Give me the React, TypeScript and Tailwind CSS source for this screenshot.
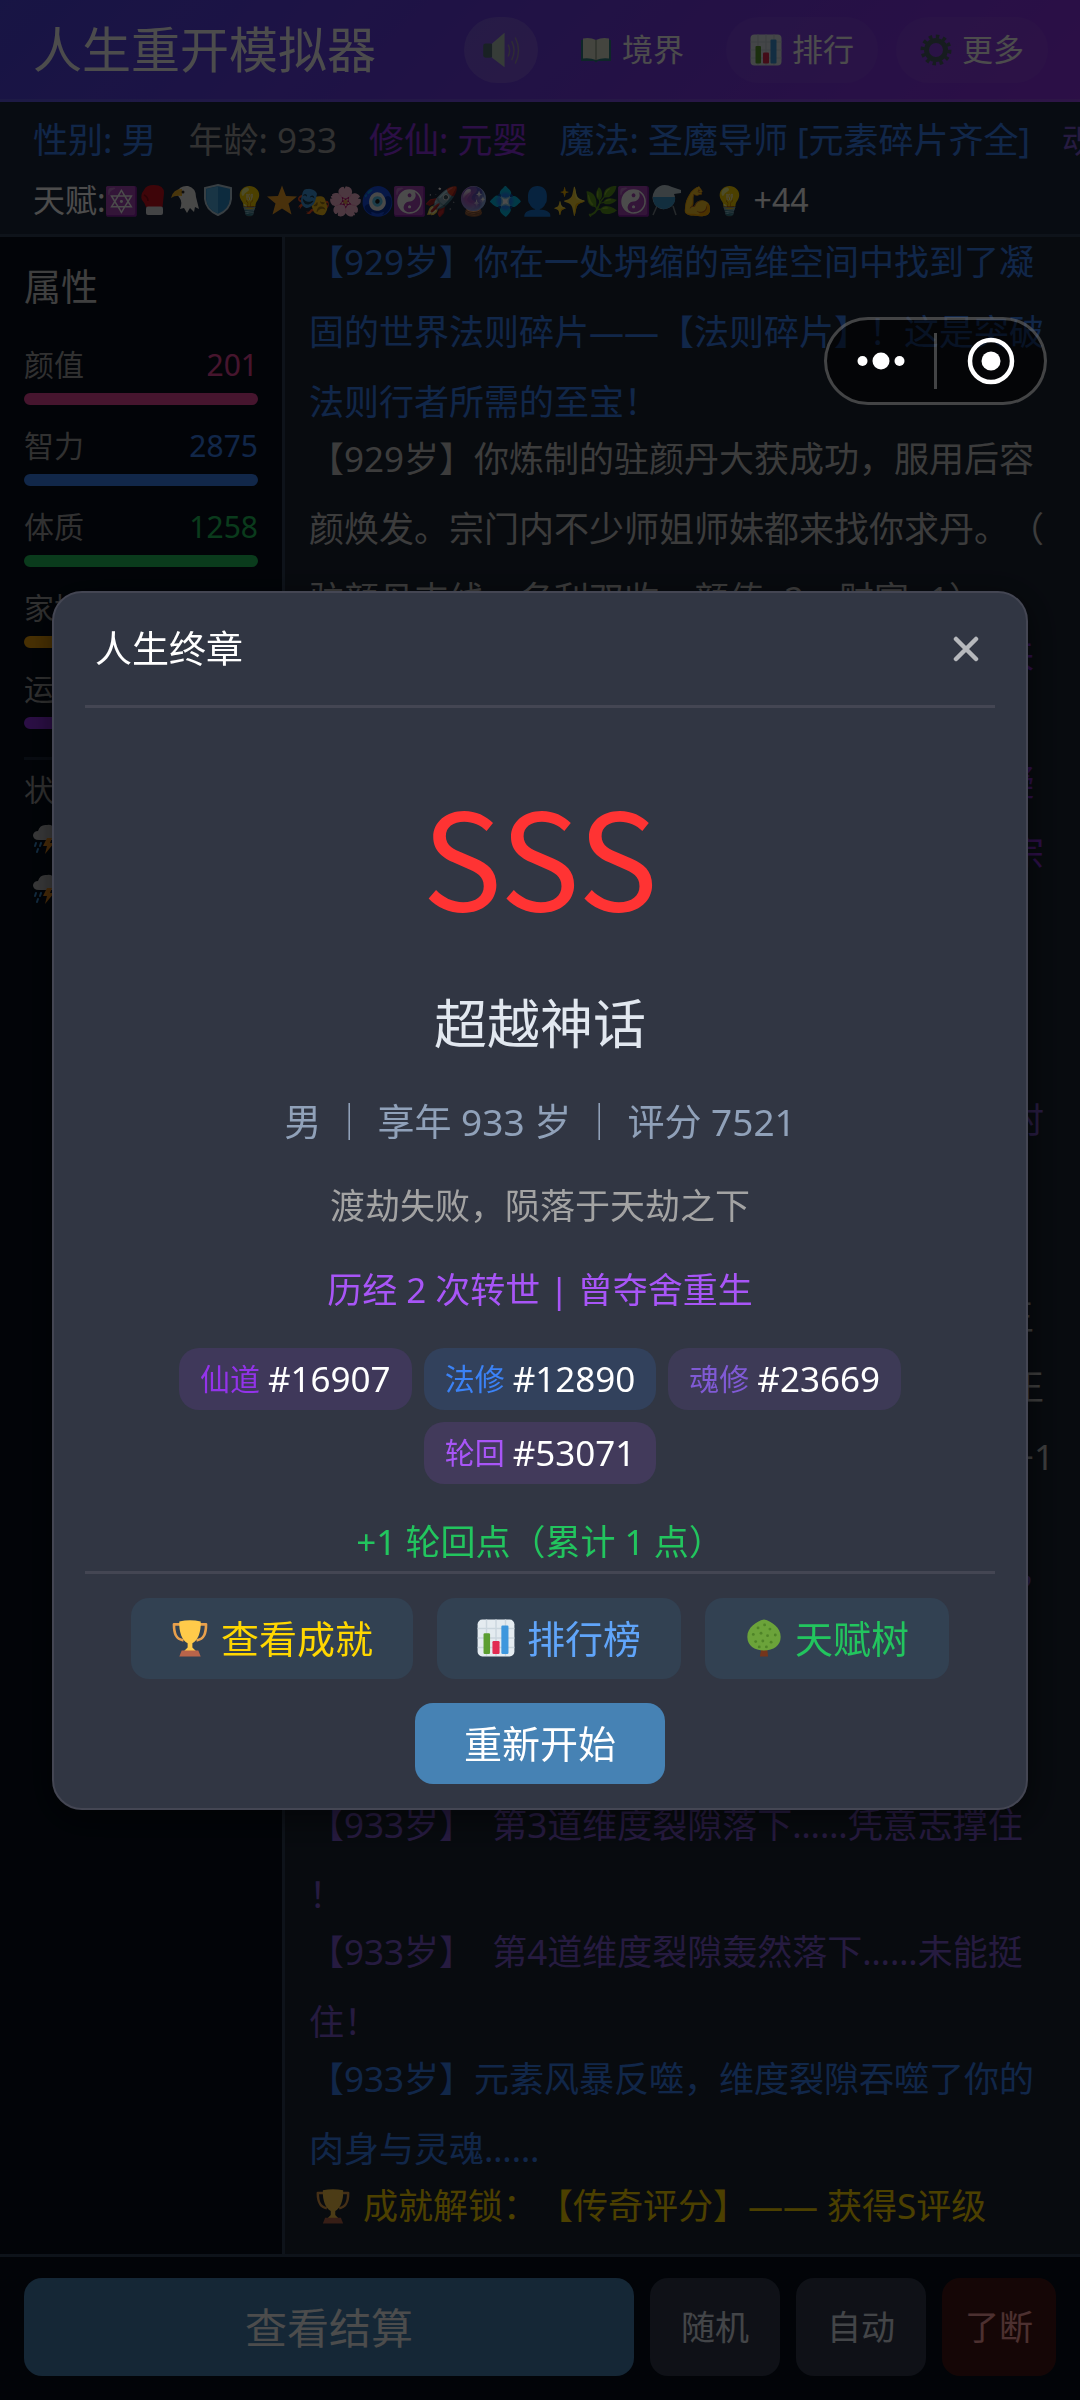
import { ReactNode, useState } from "react";

type TStat = {
  label: string;
  value: number;
  text: string;
  bar: string;
};

type TLog = {
  text: string;
  color: string;
};

const STATS: TStat[] = [
  { label: "颜值", value: 201, text: "text-[#ec4899]", bar: "bg-[#ec4899]" },
  { label: "智力", value: 2875, text: "text-[#3b82f6]", bar: "bg-[#3b82f6]" },
  { label: "体质", value: 1258, text: "text-[#22c55e]", bar: "bg-[#22c55e]" },
  { label: "家境", value: 986, text: "text-[#f5a50b]", bar: "bg-[#f5a50b]" },
  { label: "运气", value: 742, text: "text-[#9333ea]", bar: "bg-[#9333ea]" },
];

const LOGS: TLog[] = [
  {
    text: "【929岁】你在一处坍缩的高维空间中找到了凝固的世界法则碎片——【法则碎片】！这是突破法则行者所需的至宝！",
    color: "text-[#3b82f6]",
  },
  {
    text: "【929岁】你炼制的驻颜丹大获成功，服用后容颜焕发。宗门内不少师姐师妹都来找你求丹。（驻颜丹支线，名利双收，颜值+2，财富+1）",
    color: "text-[#c8c8c8]",
  },
  {
    text: "【930岁】你闭关参悟天地大道，忽有灵光袭来，元婴与天地共鸣，修为再进。（悟性略提升）",
    color: "text-[#9333ea]",
  },
  {
    text: "【930岁】你以无上法力引动九霄雷火，将其凝成本命法宝，威震八方，各派共尊你为正道大宗",
    color: "text-[#9333ea]",
  },
  {
    text: "【931岁】神魂深处传来低语，你以魂力镇守，识海深处波涛翻涌，历经了七七四十九个日夜，方才归于平静。你的神魂也自此更加凝练通透，举手投足之间皆有大道相随，只等待那突破之时。你独坐山巅，遥望星河，追忆着那前尘往事，恍若隔世。",
    color: "text-[#805ad5]",
  },
  {
    text: "【932岁】你回到故乡，昔日旧友皆已不在，王府设宴款待，席间谈起往事，感慨万千，唯有正气长存，心境也因此而圆满。（运气+1，智力+1",
    color: "text-[#c8c8c8]",
  },
  { text: "【932岁】天劫将至，乌云密布。", color: "text-[#805ad5]" },
  {
    text: "【933岁】第1道维度裂隙落下，你全力抵挡住，最终安然无恙！",
    color: "text-[#805ad5]",
  },
  {
    text: "【933岁】第2道维度裂隙落下……护体灵光破，你勉强撑住！",
    color: "text-[#805ad5]",
  },
  {
    text: "【933岁】\u00a0\u00a0第3道维度裂隙落下……凭意志撑住！",
    color: "text-[#805ad5]",
  },
  {
    text: "【933岁】\u00a0\u00a0第4道维度裂隙轰然落下……未能挺住！",
    color: "text-[#805ad5]",
  },
  {
    text: "【933岁】元素风暴反噬，维度裂隙吞噬了你的肉身与灵魂……",
    color: "text-[#3b82f6]",
  },
];

const RANKS = [
  { label: "仙道", rank: "#16907", text: "text-[#9333ea]", bg: "bg-[#3f385a]" },
  { label: "法修", rank: "#12890", text: "text-[#3b82f6]", bg: "bg-[#32415c]" },
  { label: "魂修", rank: "#23669", text: "text-[#805ad5]", bg: "bg-[#3d3a56]" },
  { label: "轮回", rank: "#53071", text: "text-[#a855f7]", bg: "bg-[#423a5b]" },
];

const Emoji = ({ char }: { char: string }) => (
  <span className="inline-flex w-8 shrink-0 items-center justify-center text-[28px] leading-none">
    {char}
  </span>
);

const Icon = ({
  children,
  className = "size-8",
}: {
  children: ReactNode;
  className?: string;
}) => (
  <svg viewBox="0 0 32 32" className={`shrink-0 ${className}`} aria-hidden="true">
    {children}
  </svg>
);

const TrophyIcon = ({ className }: { className?: string }) => (
  <Icon className={className}>
    <path
      d="M8 4.5 H2.5 C2.5 12 4 17 10.5 18 M24 4.5 H29.5 C29.5 12 28 17 21.5 18"
      fill="none"
      stroke="#e8a04c"
      strokeWidth="2.2"
      strokeLinejoin="round"
    />
    <path
      d="M7 2 Q16 0 25 2 C25.5 11 22.5 18 18 20.5 V24 L21 27 H11 L14 24 V20.5 C9.5 18 6.5 11 7 2 Z"
      fill="#ffca4a"
    />
    <path d="M9 26.5 H23 L25 31.5 H7 Z" fill="#b9644a" />
  </Icon>
);

const ChartIcon = ({ className }: { className?: string }) => (
  <Icon className={className}>
    <rect x="0.5" y="0.5" width="31" height="31" rx="4" fill="#e4ebf0" />
    <path
      d="M0.5 8 H31.5 M0.5 16 H31.5 M0.5 24 H31.5 M8 0.5 V31 M16 0.5 V31 M24 0.5 V31"
      stroke="#cbd6de"
      strokeWidth="1.2"
    />
    <rect x="5.5" y="12" width="5.5" height="17.5" rx="1" fill="#5c9e31" />
    <rect x="13" y="18.5" width="6" height="11" rx="1" fill="#e22b52" />
    <rect x="20.5" y="5.5" width="6" height="24" rx="1" fill="#3e97dd" />
  </Icon>
);

const TreeIcon = ({ className }: { className?: string }) => (
  <Icon className={className}>
    <path d="M14 24 H18.5 L19.5 31.5 H12.5 Z" fill="#74351c" />
    <path
      d="M16 0.5 C23 2 30.5 8 30 15.5 C30 22 24 26.5 16 26.5 C8 26.5 2 22 2 15.5 C1.5 8 9 2 16 0.5 Z"
      fill="#6ba33a"
    />
    <g fill="#4f8428">
      <circle cx="11" cy="7.5" r="1.2" />
      <circle cx="16.5" cy="5" r="1.2" />
      <circle cx="21" cy="8.5" r="1.2" />
      <circle cx="7" cy="13" r="1.2" />
      <circle cx="13.5" cy="12" r="1.2" />
      <circle cx="19" cy="14" r="1.2" />
      <circle cx="25.5" cy="13.5" r="1.2" />
      <circle cx="9" cy="19" r="1.2" />
      <circle cx="15" cy="18.5" r="1.2" />
      <circle cx="22" cy="19.5" r="1.2" />
      <circle cx="12" cy="23.5" r="1.2" />
      <circle cx="18" cy="23.5" r="1.2" />
    </g>
  </Icon>
);

const SpeakerIcon = () => (
  <Icon className="size-[38px]">
    <rect x="1" y="10.5" width="8" height="12" rx="2" fill="#56707a" />
    <path d="M8.5 10.5 L19 1.5 V30.5 L8.5 22.5 Z" fill="#b6c9bd" />
    <path
      d="M22 11.5 Q24.5 16.5 22 21.5 M25 8.5 Q29 16.5 25 24.5 M28 5.5 Q33.5 16.5 28 27.5"
      fill="none"
      stroke="#9b93ad"
      strokeWidth="1.2"
    />
  </Icon>
);

const BookIcon = () => (
  <Icon>
    <path d="M1 6 H31 V27 H18 L16 28.5 L14 27 H1 Z" fill="#2f7f86" />
    <path
      d="M3 4.5 Q10 3 16 6 Q22 3 29 4.5 V24.5 Q22 23.5 16 26 Q10 23.5 3 24.5 Z"
      fill="#e3e6d2"
    />
    <path d="M16 6 V26" stroke="#9fa793" strokeWidth="1.5" />
  </Icon>
);

const GearIcon = () => (
  <Icon>
    <circle
      cx="16"
      cy="16"
      r="13.5"
      fill="none"
      stroke="#4b6068"
      strokeWidth="4"
      strokeDasharray="3.5 3.5"
    />
    <circle cx="16" cy="16" r="9.5" fill="none" stroke="#4b6068" strokeWidth="5" />
  </Icon>
);

const GloveIcon = () => (
  <Icon>
    <path
      d="M6 6 Q8 1 16 1 Q26 1 26 9 L24.5 23 H8 Q7 19 4 16 Q2 11 6 6 Z"
      fill="#d1121f"
    />
    <path d="M6 11 Q10 13 10 17" fill="none" stroke="#8f0a14" strokeWidth="1.5" />
    <rect x="8" y="22.5" width="17" height="8.5" rx="2" fill="#dfe3e6" />
  </Icon>
);

const EagleIcon = () => (
  <Icon>
    <path
      d="M6 9 Q10 1 18 2 Q26 4 26 13 L29 25 L25 23 L24 28 L20 24 L17 29 L14 24 L10 25 Q13 18 9 13 Z"
      fill="#f1f1ee"
    />
    <path d="M12 5 Q3 5 1 14 Q5 11 12 12 Z" fill="#f5b52a" />
    <circle cx="13" cy="8" r="1.5" fill="#33302c" />
  </Icon>
);

const ShieldIcon = () => (
  <Icon>
    <path
      d="M16 1 L29 4 V15 Q28 26 16 31 Q4 26 3 15 V4 Z"
      fill="#2d8fd0"
      stroke="#bcd3e0"
      strokeWidth="2"
    />
    <path d="M16 2.5 V29.5 Q5 25 4.5 15 V5 Z" fill="#56b3e6" />
  </Icon>
);

const StarIcon = () => (
  <Icon>
    <path
      d="M16 1.5 L20 12 L31 12.5 L22.5 19.5 L25.5 30.5 L16 24.5 L6.5 30.5 L9.5 19.5 L1 12.5 L12 12 Z"
      fill="#f5a52a"
    />
  </Icon>
);

const AlembicIcon = () => (
  <Icon>
    <path d="M7 22 L3 31 M23 22 L26 31" stroke="#7d8a92" strokeWidth="1.5" />
    <path
      d="M31 6 L22 3 Q12 -2 5 6 Q0 14 5 21 Q13 29 22 22 Q27 16 24 10 L31 9 Z"
      fill="#c3d2da"
    />
    <path d="M3 13 H25 Q26 19 21 22.5 Q13 28 6 22 Q2.5 18 3 13 Z" fill="#3c9ad0" />
  </Icon>
);

const StormIcon = () => (
  <Icon>
    <path
      d="M7 17 Q1 17 1 12 Q2 8 6 8 Q8 1 15 2 Q20 1 23 6 Q31 6 31 12 Q30 17 25 17 Z"
      fill="#c3c3c6"
    />
    <path d="M15 15 H20 L18 20 H22 L13 31 L15 23 H11 Z" fill="#f7931e" />
    <path
      d="M4 20 L3 23 M9 20 L8 23 M6 26 L5 29 M25 20 L24 23 M28 25 L27 28"
      stroke="#3e97dd"
      strokeWidth="2"
      strokeLinecap="round"
    />
  </Icon>
);

const TALENTS: ReactNode[] = [
  <Emoji char="🔯" />,
  <GloveIcon />,
  <EagleIcon />,
  <ShieldIcon />,
  <Emoji char="💡" />,
  <StarIcon />,
  <Emoji char="🎭" />,
  <Emoji char="🌸" />,
  <Emoji char="🧿" />,
  <Emoji char="☯️" />,
  <Emoji char="🚀" />,
  <Emoji char="🔮" />,
  <Emoji char="💠" />,
  <Emoji char="👤" />,
  <Emoji char="✨" />,
  <Emoji char="🌿" />,
  <Emoji char="☯️" />,
  <AlembicIcon />,
  <Emoji char="💪" />,
  <Emoji char="💡" />,
];

const NAV = [
  { label: "境界", icon: <BookIcon />, bg: "" },
  { label: "排行", icon: <ChartIcon />, bg: "bg-white/5" },
  { label: "更多", icon: <GearIcon />, bg: "bg-white/5" },
];

const Header = () => (
  <header className="flex items-center justify-between border-b-3 border-white/10 bg-[linear-gradient(135deg,#4f46e5,#9333ea)] pr-8 pl-[33px]">
    <h1 className="text-[49px] leading-[99px] whitespace-nowrap text-white">
      人生重开模拟器
    </h1>
    <div className="flex gap-[18px] text-[31px]">
      <button
        aria-label="声音"
        className="flex h-[66px] w-[74px] items-center justify-center rounded-full bg-white/15"
      >
        <SpeakerIcon />
      </button>
      {NAV.map((item) => (
        <button
          key={item.label}
          className={`flex h-[66px] items-center gap-2.5 rounded-full px-6 text-white ${item.bg}`}
        >
          {item.icon}
          {item.label}
        </button>
      ))}
    </div>
  </header>
);

const StatusBar = () => (
  <section className="overflow-hidden border-b-3 border-slate-700 bg-slate-800 px-[33px] pt-3 pb-2.5">
    <div className="flex gap-8 text-[35px] leading-[52px] whitespace-nowrap">
      <span className="text-[#3b82f6]">性别: 男</span>
      <span className="text-[#a3a3a3]">年龄: 933</span>
      <span className="text-[#9333ea]">修仙: 元婴</span>
      <span className="text-[#3b82f6]">魔法: 圣魔导师 [元素碎片齐全]</span>
      <span className="text-[#805ad5]">魂修: 魂圣</span>
    </div>
    <div className="mt-2.5 flex items-center text-[32px] leading-[48px] whitespace-nowrap text-white">
      <span>天赋:</span>
      {TALENTS.map((talent, i) => (
        <span key={i} className="flex">
          {talent}
        </span>
      ))}
      <span className="ml-2">+44</span>
    </div>
  </section>
);

const Sidebar = () => (
  <aside className="w-[285px] shrink-0 border-r-3 border-slate-700 bg-[#070f1c] px-6">
    <h2 className="pt-[26px] text-[37px] leading-[48px] text-[#d4d4d4]">
      属性
    </h2>
    <div className="mt-[31px] flex flex-col gap-[18px]">
      {STATS.map((s) => (
        <div key={s.label}>
          <div className="flex justify-between text-[30px] leading-[45px]">
            <span className="text-[#a3a3a3]">{s.label}</span>
            <span className={s.text}>{s.value}</span>
          </div>
          <div className={`mt-1.5 h-3 rounded-full ${s.bar}`}></div>
        </div>
      ))}
    </div>
    <div className="mt-7 border-t-3 border-slate-800 pt-1.5">
      <p className="text-[30px] leading-[48px] text-[#a3a3a3]">状态</p>
      <p className="flex h-[50px] items-center pl-2">
        <StormIcon />
      </p>
      <p className="flex h-[50px] items-center pl-2">
        <StormIcon />
      </p>
    </div>
  </aside>
);

const EventLog = () => (
  <section className="min-w-0 flex-1 overflow-hidden bg-[#1b2533] px-6">
    <div className="-mt-2.5 flex flex-col text-[35px] leading-[70px] [line-break:anywhere] [text-spacing-trim:space-all]">
      {LOGS.map((log, i) => (
        <p key={i} className={`-mb-[13px] ${log.color}`}>
          {log.text}
        </p>
      ))}
      <p className="flex items-center text-[#ffd700]">
        <TrophyIcon className="mr-3 ml-1.5 size-9" />
        成就解锁：【传奇评分】—— 获得S评级
      </p>
    </div>
  </section>
);

const Footer = () => (
  <footer className="flex gap-4 border-t-3 border-slate-700 bg-[#070f1c] px-6 pt-[21px] pb-6 text-[34px] text-slate-200">
    <button className="h-[98px] flex-1 rounded-[18px] bg-[#4682b4] text-[42px] text-white">
      查看结算
    </button>
    <button className="h-[98px] w-[130px] rounded-[18px] bg-[#323a4e]">
      随机
    </button>
    <button className="h-[98px] w-[130px] rounded-[18px] bg-[#323a4e]">
      自动
    </button>
    <button className="h-[98px] w-[114px] rounded-[18px] bg-[#481715] text-red-300">
      了断
    </button>
  </footer>
);

const Capsule = () => (
  <div className="fixed top-[317px] right-[33px] z-20 flex h-[88px] w-[223px] items-center rounded-full border-3 border-white/25 bg-black/50">
    <button aria-label="菜单" className="flex flex-1 justify-center">
      <svg width="48" height="20" viewBox="0 0 48 20" fill="#fff">
        <circle cx="5.5" cy="10" r="5" />
        <circle cx="24" cy="10" r="8.5" />
        <circle cx="42.5" cy="10" r="5" />
      </svg>
    </button>
    <span className="h-14 w-[3px] bg-white/25"></span>
    <button aria-label="关闭程序" className="flex flex-1 justify-center">
      <svg width="48" height="48" viewBox="0 0 48 48">
        <circle cx="24" cy="24" r="21" fill="none" stroke="#fff" strokeWidth="4.5" />
        <circle cx="24" cy="24" r="9.5" fill="#fff" />
      </svg>
    </button>
  </div>
);

const EndingModal = ({ onClose }: { onClose: () => void }) => (
  <div className="fixed inset-0 z-10 flex items-center justify-center bg-black/70 px-[52px]">
    <div
      role="dialog"
      aria-labelledby="ending-title"
      className="w-full rounded-[30px] border-2 border-[#444653] bg-[#313643] px-[31px] shadow-[0_8px_32px_rgba(0,0,0,0.5)]"
    >
      <div className="flex items-center justify-between border-b-3 border-[#444653] pr-3 pl-2.5">
        <h2
          id="ending-title"
          className="text-[37px] leading-[112px] text-white"
        >
          人生终章
        </h2>
        <button aria-label="关闭" onClick={onClose} className="p-1">
          <svg width="26" height="26" viewBox="0 0 26 26">
            <path
              d="M3 3 L23 23 M23 3 L3 23"
              stroke="#b6b8bc"
              strokeWidth="4.5"
              strokeLinecap="round"
            />
          </svg>
        </button>
      </div>

      <div className="flex flex-col items-center border-b-3 border-[#444653] pt-20 pb-[5px] text-[35px] leading-[48px]">
        <p className="font-['Noto_Sans_CJK_SC',sans-serif] text-[134px] leading-[130px] text-[#ff3333]">
          SSS
        </p>
        <p className="mt-[74px] text-[53px] leading-[64px] text-slate-200">
          超越神话
        </p>
        <p className="mt-[42px] text-[37px] text-slate-400">
          男 ｜ 享年 933 岁 ｜ 评分 7521
        </p>
        <p className="mt-9 text-[#a3a3a3]">渡劫失败，陨落于天劫之下</p>
        <p className="mt-9 text-[#a855f7]">历经 2 次转世 | 曾夺舍重生</p>
        <div className="mt-[34px] flex flex-wrap justify-center gap-3 px-20">
          {RANKS.map((r) => (
            <div
              key={r.label}
              className={`flex h-[62px] items-center gap-2 rounded-[20px] px-[21px] ${r.bg}`}
            >
              <span className={`text-[30px] ${r.text}`}>{r.label}</span>
              <span className="text-[35px] text-white">{r.rank}</span>
            </div>
          ))}
        </div>
        <p className="mt-[34px] text-[#22c55e]">+1 轮回点（累计 1 点）</p>
      </div>

      <div className="flex flex-wrap justify-center gap-6 pt-6 pb-6 text-[38px]">
        <button className="flex h-[81px] items-center gap-3 rounded-[18px] bg-[#324152] px-10 text-[#ffd700]">
          <TrophyIcon className="size-[38px]" />
          查看成就
        </button>
        <button className="flex h-[81px] items-center gap-3 rounded-[18px] bg-[#324152] px-10 text-[#60a5fa]">
          <ChartIcon className="size-[38px]" />
          排行榜
        </button>
        <button className="flex h-[81px] items-center gap-3 rounded-[18px] bg-[#324152] px-10 text-[#22c55e]">
          <TreeIcon className="size-[38px]" />
          天赋树
        </button>
        <button className="h-[81px] rounded-[18px] bg-[#4682b4] px-[49px] text-white">
          重新开始
        </button>
      </div>
    </div>
  </div>
);

const App = () => {
  const [showEnding, setShowEnding] = useState(true);

  return (
    <div className="flex min-h-screen flex-col bg-slate-900 font-['Noto_Sans','Noto_Sans_CJK_SC',sans-serif]">
      <Header />
      <StatusBar />
      <main className="flex flex-1">
        <Sidebar />
        <EventLog />
      </main>
      <Footer />
      <Capsule />
      {showEnding && <EndingModal onClose={() => setShowEnding(false)} />}
    </div>
  );
};

export default App;
